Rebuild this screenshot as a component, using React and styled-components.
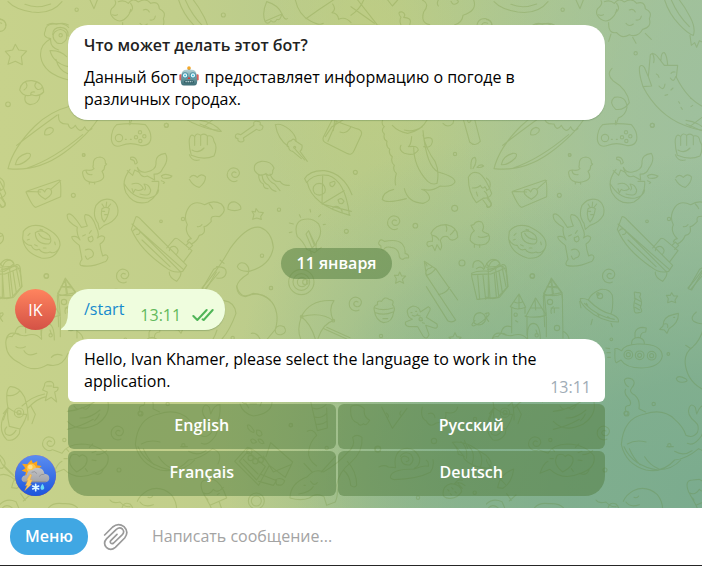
import React from "react";
import styled, { createGlobalStyle, css } from "styled-components";

const GlobalStyle = createGlobalStyle`
  * { box-sizing: border-box; }
  body { margin: 0; font-family: "Open Sans", "Noto Sans", sans-serif; font-size: 16px; line-height: 22px; color: #000; }
  button, input { font: inherit; }
`;

const Page = styled.div`
  display: flex;
  flex-direction: column;
  min-height: 100vh;
  background: #fff;
`;

const Chat = styled.main`
  position: relative;
  flex: 1;
  display: flex;
  flex-direction: column;
  padding: 25px 15px 12px;
  background:
    radial-gradient(ellipse 60% 68% at 102% 98%, #7aab8e 0%, rgba(122, 171, 142, 0.85) 35%, rgba(122, 171, 142, 0) 100%),
    radial-gradient(ellipse 42% 70% at 108% 24%, #9dbf9f 0%, rgba(157, 191, 159, 0.7) 45%, rgba(157, 191, 159, 0) 100%),
    radial-gradient(ellipse 34% 60% at 66% 88%, rgba(134, 178, 140, 0.75) 0%, rgba(134, 178, 140, 0) 100%),
    radial-gradient(ellipse 16% 46% at 53% 10%, rgba(198, 208, 126, 0.6) 0%, rgba(198, 208, 126, 0) 100%),
    linear-gradient(90deg, #c7d28b 0%, #c2cf8b 25%, #b4c98c 52%, #aac691 100%);
`;

const Wallpaper = styled.svg`
  position: absolute;
  inset: 0;
  width: 100%;
  height: 100%;
  pointer-events: none;
`;

const History = styled.div`
  position: relative;
  flex: 1;
  display: flex;
  flex-direction: column;
  max-width: 590px;
`;

const Row = styled.section`
  display: grid;
  grid-template-columns: 41px minmax(0, 1fr);
  column-gap: 12px;
  align-items: end;
  margin-top: ${(p) => p.$gap || 0}px;
`;

const Content = styled.div`
  grid-column: 2;
  min-width: 0;
`;

const Intro = styled.article`
  padding: 9px 16px 10px;
  border-radius: 20px;
  background: #fff;
  box-shadow: 0 1px 1px rgba(70, 110, 60, 0.3);
  h1 { margin: 0 0 10px; font-size: 16px; line-height: 22px; font-weight: 600; color: #222; }
  p { margin: 0; }
`;

const RobotIcon = styled.svg`
  width: 20px;
  height: 20px;
  margin: 0 1px 0 2px;
  vertical-align: -3px;
`;

const Spacer = styled.div`
  flex: 1;
  min-height: 24px;
`;

const DateBadge = styled.time`
  display: block;
  width: fit-content;
  margin: 0 auto;
  padding: 4px 15px 5px;
  border-radius: 16px;
  background: rgba(82, 123, 61, 0.5);
  color: #fff;
  font-weight: 600;
`;

const Avatar = styled.div`
  display: grid;
  place-items: center;
  width: 41px;
  height: 41px;
  border-radius: 50%;
  overflow: hidden;
  color: #fff;
  background: linear-gradient(#ff845e, #d45246);
  svg { display: block; width: 100%; height: 100%; }
`;

const OutBubble = styled.article`
  position: relative;
  display: flex;
  gap: 16px;
  width: fit-content;
  height: 41px;
  padding: 9px 11px 0 16px;
  border-radius: 20px 20px 20px 0;
  background: #effdde;
  box-shadow: 0 1px 1px rgba(70, 110, 60, 0.3);
`;

const Tail = styled.svg`
  position: absolute;
  left: -7px;
  bottom: 0;
  width: 8px;
  height: 18px;
  fill: #effdde;
`;

const Command = styled.a`
  color: #168acd;
  text-decoration: none;
`;

const Sent = styled.span`
  display: flex;
  gap: 11px;
  padding-top: 6px;
  color: #62b95b;
  svg { width: 22px; height: 14px; margin-top: 4px; }
`;

const InBubble = styled.article`
  display: flex;
  align-items: flex-end;
  justify-content: space-between;
  padding: 9px 14px 10px 16px;
  border-radius: 20px 20px 6px 6px;
  background: #fff;
  p { margin: 0; max-width: 460px; }
`;

const Stamp = styled.time`
  margin: 0 0 -6px -40px;
  color: #a0acb6;
`;

const Keyboard = styled.div`
  display: grid;
  grid-template-columns: 1fr 1fr;
  gap: 2px;
  margin-top: 2px;
`;

const corners = { left: "6px 6px 6px 20px", right: "6px 6px 20px 6px" };

const Choice = styled.button`
  height: 45px;
  padding: 0 0 3px;
  border: 0;
  border-radius: 6px;
  background: rgba(82, 123, 61, 0.5);
  color: #fff;
  font-weight: 600;
  cursor: pointer;
  ${(p) => p.$corner && css`border-radius: ${corners[p.$corner]};`}
`;

const Composer = styled.form`
  display: flex;
  align-items: center;
  height: 58px;
  padding: 0 10px;
  border-bottom: 1px solid #262626;
  background: #fff;
`;

const MenuButton = styled.button`
  height: 37px;
  padding: 0 15px 1px;
  border: 0;
  border-radius: 18px;
  background: #40a7e3;
  color: #fff;
  font-weight: 600;
  cursor: pointer;
`;

const AttachButton = styled.button`
  display: grid;
  place-items: center;
  width: 36px;
  height: 37px;
  margin-left: 10px;
  padding: 0;
  border: 0;
  background: none;
  cursor: pointer;
  svg { width: 26px; height: 28px; }
`;

const MessageInput = styled.input`
  flex: 1;
  min-width: 0;
  margin-left: 18px;
  padding: 0 0 1px;
  border: 0;
  outline: 0;
  background: none;
  color: #000;
  &::placeholder { color: #a3a3a3; opacity: 1; }
`;

/* Line drawings of the wallpaper tile, grouped by area; at = origin of the area. */
const SPIRAL = "c-8-6-18 4-9 12c14 8 26-10 14-22c-18-12-36 4-30 24c6 12 18 16 28 10";
const areas = [
  {
    at: [0, 0],
    d: [
      "M24 5Q45 28 95 36Q155 44 186 5M75 13Q110 28 152 12M270 0L282 26L292 0",
      "M345 2Q352 12 335 26Q325 42 345 58Q365 72 385 46Q390 40 392 28M355 5Q372 -2 385 10Q398 -8 415 6Q438 -8 452 10Q476 2 478 26Q500 36 490 56Q498 82 470 88Q456 114 430 104Q408 118 392 98Q366 102 368 68M375 102L368 124M440 112L450 130M478 100L496 118M392 10Q405 28 388 38M338 44q8 4 14 0M430 30q12-6 18 6M420 70q10 12 22 2M450 60q14 2 16-12",
      "M536 0Q548 40 580 74Q606 102 622 106Q630 84 612 50Q596 20 580 0M556 0Q575 45 610 80M612 106l4 30l10-8l6 14l8-20l14 6",
      "M800 5Q785 38 795 64L846 42Q835 15 800 5M795 64q8 12 18-2q10 10 18-4q10 4 14-14M846 42q8 20 16 14",
      "M886 0Q896 45 930 62Q958 78 970 70M918 56L955 30L1000 0M998 12q12 16-2 26q18 2 20 20q20-10 37 10",
      "M0 58a18 18 0 0 1 0 36M136 92Q126 112 152 116M136 92Q136 74 160 72Q190 66 206 82M152 116Q118 134 122 170Q130 222 206 240M158 104Q158 82 182 82Q206 84 204 108M170 128Q152 112 164 96Q184 80 198 98Q206 120 186 130Q176 132 170 128M150 152Q180 150 200 170M150 152Q160 190 205 200M152 118Q150 142 176 150M168 178Q176 212 205 222",
      "M46 133L56 150L80 153L64 170L67 194L46 184L24 193L30 170L16 154L38 150Z",
      "M59 270Q64 240 96 242Q130 246 131 276Q116 292 96 284Q72 294 59 270M76 288Q70 308 90 314Q118 312 120 284M78 248Q86 262 72 270M110 246Q98 258 112 268Q122 270 127 262M92 284Q92 274 104 276",
      "M24 506Q40 442 105 378Q150 334 212 318M24 506Q112 516 190 460Q270 400 298 350M50 436Q98 398 172 345M82 504Q160 478 248 404M176 344Q172 374 204 372Q212 396 226 376Q240 404 254 380Q262 400 276 386M134 404Q132 386 150 382Q164 384 158 396Q148 408 134 404M46 494Q50 468 80 460Q98 458 88 474Q66 496 46 494",
      "M388 374L389 362M350 374Q392 368 436 374Q456 396 452 420Q446 440 420 436Q390 426 366 436Q338 446 334 418Q334 388 350 374M376 418h3M391 418h3",
      "M568 418Q572 398 584 410Q590 396 602 406Q614 398 622 408Q640 404 642 424Q654 440 642 468Q612 482 574 466Q566 440 568 418M584 410v26M602 408v28M622 408v26M568 464Q576 486 598 480M576 450q20 12 36-6",
      "M706 408Q708 398 722 404L762 376Q758 362 772 364Q784 364 780 374Q794 376 786 388Q778 394 770 388L730 414Q736 426 722 426Q712 424 714 416Q706 416 706 408",
      "M826 374Q842 368 868 388Q890 408 888 424L906 436Q908 450 900 454L922 484M886 448L914 480M878 454L904 476M826 374Q834 420 866 440Q866 452 878 454M862 440Q860 424 874 422Q880 412 888 424M600 361Q640 366 664 394Q650 396 620 380L600 372",
      "M970 412L1002 348M970 412Q966 424 980 430L1040 460Q1056 468 1062 452L1084 404Q1088 390 1070 386L1004 362M984 424L1010 364M1004 362L1000 392M976 410L996 380L1044 350M1020 396q20 8 32-14",
    ],
    c: [[230, 29, 5], [670, 45, 6], [24, 313, 7], [499, 376, 6], [251, 465, 4], [357, 414, 11], [420, 397, 5], [408, 412, 5], [433, 409, 5], [421, 423, 5], [182, 106, 5], [884, 442, 3]],
  },
  {
    at: [1053, 0],
    d: [
      "M0 76L86 76M20 0L80 76M0 20L70 70M38 0Q28 26 0 46M110 0L124 18L140 0M150 52Q136 34 154 36Q166 42 158 52Q180 54 178 66L176 75M150 52Q144 62 150 75",
      "M214 0Q238 12 218 36Q208 70 236 74M262 0Q256 10 262 18M300 4Q306 18 318 10Q326 4 318 0M368 0Q380 32 336 46Q334 68 310 75M378 75Q382 54 404 56Q424 62 422 76M392 75Q396 64 410 70M546 75Q560 66 574 73Q596 66 610 75",
      "M783 205Q765 222 786 242Q830 268 835 308Q820 332 794 328Q772 308 790 292Q826 286 828 322Q824 346 802 354L795 374",
      "M876 260Q862 216 866 200Q872 192 880 202L892 230M876 260Q920 344 1000 376Q1040 392 1060 390M892 230L898 164Q908 156 918 168L940 196L980 196L976 232Q1010 300 1060 322M930 180Q930 156 940 158Q948 166 950 196M876 260L902 258L892 230M904 160Q912 172 908 188M924 258Q938 276 942 252M958 234q10 16 16-4M924 232q-2-8-8-10M960 220q4-6 12-4M960 270l6-6M1018 294l6 4M990 322l4 6M986 310l-3-5M1020 320l5-4M950 284l-8 2M1016 380L1056 350",
      "M95 360Q90 374 100 380Q88 390 100 402Q96 418 108 424Q104 440 116 448Q112 462 124 470Q118 486 130 496Q124 510 136 520Q130 540 134 555",
      "M228 360Q212 392 170 400Q140 394 124 376M160 390Q186 398 214 380M182 410Q180 436 172 440M150 436Q142 450 160 460Q190 470 202 450Q200 436 176 440M220 415Q246 408 244 426Q240 446 218 440M216 405Q226 450 252 484Q266 514 258 550M188 440Q188 500 230 544Q244 556 258 550M216 392Q226 500 262 516Q312 530 312 546Q304 562 268 558Q240 576 218 568",
      "M338 362L356 426Q372 442 388 424L372 362M350 362Q352 374 360 362M276 370Q290 386 306 370L308 362",
    ],
    c: [[312, 462, 5], [13, 517, 6], [854, 160, 5], [904, 376, 6]],
  },
  {
    at: [0, 360],
    d: [
      "M280 135Q278 112 300 111Q318 114 316 130L320 132L314 138Q314 150 306 154Q322 180 288 186Q252 192 248 160Q246 150 260 150Q274 154 282 146M280 135Q277 142 282 146M258 152Q260 166 276 164M268 186v6M284 186v6",
      "M80 214L178 180Q184 184 182 230L108 262Q98 262 78 216ZM80 214L122 216M182 182L152 208M136 238Q108 222 116 210Q128 204 134 216Q140 200 152 208Q162 222 136 238M-8 170Q20 180 10 206Q0 214 -18 222M4 228L16 250Q14 262 4 262L-12 238",
      "M390 148Q362 184 378 218Q402 258 444 246Q480 226 476 184M382 152L398 166L404 150L420 158M372 190Q400 240 448 234Q474 228 476 210M412 142Q420 160 440 156Q470 150 468 128Q466 104 496 100Q508 120 488 146Q480 164 462 162L464 180L442 168Q422 178 412 142M456 184h18M392 112Q408 108 412 128Q404 136 404 128Q404 120 392 118ZM484 168Q494 158 516 168Q510 178 488 174ZM484 182Q500 188 490 190M396 192Q420 184 430 206Q416 216 406 208L400 218L396 206M420 222Q452 232 452 210Q446 192 432 192Q440 204 434 210",
      "M570 172Q580 160 592 172Q604 158 616 170Q618 186 598 202Q580 200 568 178M708 158" + SPIRAL,
      "M764 152Q758 128 784 124Q812 122 822 144L818 152Q820 166 806 166Q796 160 790 164Q776 170 764 152M776 166Q776 186 790 192Q790 206 804 206M786 164Q788 190 806 196Q814 212 828 214M798 160Q804 184 824 192L840 212M810 162Q820 188 840 184Q850 198 868 196",
      "M914 176Q930 150 974 152Q1030 160 1056 224M914 176L920 188Q940 160 984 166Q1036 182 1048 284M922 188Q936 256 1050 286M968 168L966 252M966 252L1032 212M966 252L1054 274M942 198Q950 186 968 192Q980 204 974 218Q960 232 944 220Q936 210 942 198M990 188q-2 12 8 12q12-12 4-16zM1014 240q10-10 18 4q-4 10-14 6zM998 268q0-12 16-8q14 8 12 18",
      "M232 322Q198 304 202 284Q214 272 244 322Q256 320 262 318Q250 290 256 284Q276 282 288 320Q300 344 292 354Q306 342 314 352Q314 364 300 372Q302 392 308 408Q322 400 324 412Q320 426 312 426Q272 444 242 436Q236 430 246 418L238 376Q212 356 216 350Q232 346 240 360Q228 340 232 322M256 390Q272 382 280 398Q282 412 268 414Q262 424 256 408M248 348l8-4M268 340l6-8M264 354L276 348Q284 362 272 366Q262 362 266 352",
      "M298 328L294 310Q276 286 288 256Q308 230 336 240Q360 256 352 286Q340 308 312 316ZM306 266Q318 258 328 266Q324 294 312 306Q300 292 306 266M312 262L306 252M318 262L320 246M324 262L332 252M314 284h8M308 274h6",
      "M70 334Q90 308 130 320Q182 344 180 376Q168 420 124 414Q72 398 68 354ZM106 338Q124 324 148 346Q158 366 146 372Q106 372 106 338M68 358Q80 378 94 376Q100 394 118 388Q130 404 150 396Q164 404 178 384M116 340Q124 358 148 358M90 340l-6 6M82 360l6-2M104 374l8 4M130 384h8M164 366l2 8M120 328l8 2",
      "M394 328L408 290Q414 288 424 300L560 436L548 454Q520 462 494 440Q420 390 394 328M396 312L550 448M410 324L540 454M426 360L510 440M500 384L524 356Q530 352 540 362L576 392L552 424M508 392Q510 376 526 380Q540 390 530 402M558 376L568 366L578 376L566 388M562 366Q566 356 574 356Q552 334 562 314Q548 288 568 260Q584 240 614 254Q640 238 664 252Q684 272 658 290Q628 284 634 304Q620 320 612 320Q618 344 598 346Q590 366 574 372M592 320Q600 322 606 314M628 252Q636 260 638 266M508 456Q506 472 530 484Q546 466 542 454M400 332Q406 322 418 330Q424 342 410 344",
      "M684 262Q686 244 706 246Q726 256 722 268Q704 276 684 268ZM768 266L776 276L790 278L782 290L784 298L770 294L758 298L762 284L756 274L766 276Z",
      "M892 350Q880 312 904 300Q936 290 956 312Q970 338 950 366Q946 378 950 390M892 350Q910 364 920 388M918 342L936 384L946 374L926 332ZM928 338L942 374M920 388L944 398L964 382M930 388l4 14M902 292l-4-8M932 276l-2-8M956 290l6-6M970 314l6-1M880 312l-12-3M876 336l-8 2",
      "M606 504Q654 450 690 386Q740 316 780 322Q816 336 820 382Q812 436 748 454Q718 456 712 440Q716 424 734 430Q752 442 744 462Q714 480 710 500Q712 528 736 530Q780 510 810 540M614 508L658 456M660 420L672 430M650 440Q682 440 678 460Q674 478 650 474",
      "M376 462" + SPIRAL,
      "M-4 442L46 438Q62 438 66 500L42 530M-4 442L-20 450M6 442L12 536M28 440L38 526M48 440L60 500M8 440Q16 416 34 422Q46 432 40 440M-6 530L20 536L40 532M-8 440Q-16 420 0 430L8 440M172 528L196 474L228 518L174 528M186 500L214 500M196 476L202 520",
    ],
    c: [[251, 105, 4], [220, 226, 6], [483, 304, 4], [549, 297, 5], [837, 269, 5], [786, 407, 5], [813, 504, 5], [139, 468, 7], [1039, 334, 6], [904, 486, 38], [904, 486, 25], [906, 486, 14]],
  },
  {
    at: [1053, 360],
    d: [
      "M94 238Q96 216 128 208M94 238Q104 252 166 236M160 206Q170 248 216 250Q252 240 222 212L212 208",
      "M352 172Q362 150 384 160Q402 170 422 220Q416 236 398 234L376 248Q352 220 352 172M364 204Q382 204 388 196Q394 210 402 200L408 210M396 240L412 262Q424 260 420 250L408 234M376 216l4 12M400 214q8 6 10 16M360 146Q358 112 372 112Q380 124 366 146M378 142Q388 130 398 138Q390 144 380 142M136 302" + SPIRAL,
      "M228 374Q226 362 244 364Q246 346 240 340Q252 314 286 314Q322 322 320 352Q302 370 290 350Q272 346 268 362Q276 380 268 390L258 374L252 392L244 376L232 380ZM284 314Q290 326 286 334M312 328Q304 340 298 344M244 346Q258 348 264 360",
      "M364 324L360 316L368 314Q376 300 392 306Q402 318 394 332Q398 338 412 342Q422 360 404 372Q374 382 358 362Q356 342 370 332Q364 328 364 322M382 350Q396 356 414 346M370 374v8M386 374v8M84 366Q88 354 100 364Q140 356 154 372Q164 384 162 400Q176 404 172 414Q160 412 156 418Q144 418 144 402Q140 384 120 382Q102 378 98 390Q88 390 90 378Q80 372 84 366",
      "M220 424L226 466L314 600M220 424L254 446L320 540M226 466Q242 462 254 446M262 524Q284 520 296 502M222 430q6 2 6 8M224 462Q224 446 238 444L244 440M146 456L152 468L164 468L154 478L158 490L146 484L134 490L136 476L130 466L142 466Z",
      "M362 460Q380 450 418 454L454 434Q464 432 466 446L470 500L440 532L378 538L362 470ZM364 464L420 462L464 444M380 466L386 538M396 466L404 538M412 466L412 536M430 460L436 530M444 454L454 518M366 442Q364 420 384 422Q400 430 400 446M400 446Q410 420 426 418Q446 420 446 432Q430 448 410 448M376 446Q390 436 398 448",
      "M1012 506L1046 448L1060 440M1022 510L1054 456M1012 506L1022 510M314 600Q304 610 290 602L226 500",
    ],
    c: [[311, 265, 9], [193, 317, 7], [333, 429, 9], [544, 468, 6]],
  },
  {
    at: [0, 840],
    d: [
      "M60 250Q20 232 18 196Q14 166 36 170Q44 154 60 164M60 250Q100 280 142 254Q186 266 204 220M48 200Q60 208 76 200M72 212Q84 232 110 220M154 232Q166 218 186 226M172 48L176 140M150 150L154 162M228 46L230 60M196 100Q192 86 202 80",
      "M24 384Q14 330 30 320Q56 318 74 352Q86 386 84 420M24 384Q16 400 10 420M22 346Q44 350 58 334M134 316Q132 304 150 304Q164 306 160 322L174 322Q176 332 164 336L170 366L154 352L136 362L142 336L128 330ZM140 318h16M134 342Q94 350 66 378M138 350Q110 356 84 384",
      "M8 124q-10-10-8-24",
    ],
    c: [[57, 398, 14], [57, 398, 6]],
  },
  {
    at: [1053, 840],
    d: [
      "M70 92Q66 76 80 74Q76 60 92 64Q100 48 114 58Q132 60 124 74Q134 82 128 96Q124 128 98 128Q74 122 70 92M72 84Q96 94 126 84M74 98Q100 108 126 96M96 116h14",
      "M170 100Q164 86 186 78Q206 80 208 96L232 80Q242 84 234 96L226 112L258 132Q262 146 250 144L224 136L234 164Q226 182 216 168L200 140L174 140Q160 136 164 126L184 118Q170 112 170 100M180 98h3M194 94h3M184 106Q194 112 200 102M200 106l8 2M206 120l8 2M214 128l6 2",
      "M372 122Q356 136 368 138Q396 128 414 104Q416 94 402 102M368 118Q370 98 388 98Q408 104 402 124Q388 142 370 130ZM312 158L318 170L330 172L320 184M312 158L306 170L294 172L302 180",
      "M482 82L482 158M522 82L522 100M482 82Q498 92 524 82L504 42L478 80ZM490 66q10 6 24 0M504 44L504 84M524 110L554 54L586 106Q552 116 522 108ZM540 84h30M552 56L554 90M528 110L528 166M586 110L586 170M578 40L602 -2L634 42Q606 52 578 42M580 44L586 106M634 44L636 174M600 0L604 40M588 20L620 24M530 178Q526 130 548 130Q568 132 568 180M600 84h24M610 84v14M494 122l6 4M424 176Q430 156 450 160Q456 132 480 140M450 160Q470 170 486 166Q512 158 528 176M636 154Q650 160 654 176",
      "M688 56Q686 66 706 86Q750 126 802 126Q806 112 780 102M688 56Q700 54 712 60M712 60Q720 40 750 28Q776 26 784 46Q788 80 780 102Q748 96 712 60M700 70Q740 110 790 118M686 64L690 84M724 118L720 134M780 130L784 140M706 70l4 6M740 102l4 6M770 110l6 4",
      "M850 40Q848 34 860 38Q874 36 866 50Q876 66 868 82Q878 98 864 98Q848 102 850 88Q846 74 852 58ZM850 54L868 64M850 68L870 78M852 82L866 90M962 38L968 48L980 48L972 60L974 68L962 64L950 68L952 56L946 46L958 46Z",
      "M982 100Q984 128 954 146L948 160L940 150L926 148L936 138Q936 110 966 104ZM950 142Q952 128 940 132M968 112h3",
      "M792 210Q788 204 800 206L812 212Q820 194 860 192Q932 190 934 228Q928 262 872 264Q824 264 810 240L796 248Q790 246 792 210M842 192Q840 174 862 172Q880 176 880 190M852 172L852 158Q856 142 876 142L886 144L884 156Q868 156 868 174M768 218h10M770 232h8M764 204l12 2",
      "M1056 150Q1046 182 1026 200Q996 220 1004 260Q1014 310 1060 330M976 296Q980 284 1004 296Q1014 304 1000 306Q980 310 976 296M1036 96Q1016 112 1028 124Q1040 132 1060 132M1004 196l16 10",
      "M820 300Q826 290 844 298Q856 308 842 324Q832 336 852 346Q868 360 864 386L884 396M820 300Q822 316 832 320M824 328Q818 340 830 352Q844 366 836 376Q820 376 824 392",
    ],
    c: [[90, 168, 5], [747, 48, 8], [741, 42, 4], [781, 178, 4], [952, 222, 4], [832, 224, 13], [866, 226, 13], [902, 227, 13], [832, 224, 6], [866, 226, 6], [902, 227, 6], [908, 372, 5], [209, 118, 5], [597, 66, 8], [618, 144, 8], [557, 166, 5], [494, 104, 5], [827, 401, 7]],
  },
  {
    at: [0, 1185],
    d: [
      "M24 38L8 70Q-4 110 20 134Q42 142 58 116L60 102M24 38L10 56M92 32L106 58L96 86M24 38Q52 60 80 58M20 96Q10 106 18 118Q34 128 48 106M80 58Q78 74 60 102L28 94Q20 60 24 38M154 140" + SPIRAL,
      "M360 108" + SPIRAL,
      "M0 192Q4 214 50 250M0 240Q26 230 60 270M10 210L40 240M62 296L76 316M70 318L90 300M0 328Q20 308 48 320L56 338M146 338Q160 322 188 326Q220 324 232 338M8 338Q20 326 36 338",
    ],
    c: [[193, 135, 5], [873, 90, 5], [769, 318, 24], [769, 318, 15]],
  },
  {
    at: [180, 1194],
    d: [
      "M22 70Q56 106 112 78Q152 50 144 12M22 40Q74 36 120 0M42 24q10 16 24 4q14 14 24 -6M60 60Q90 62 120 36M104 68q10-10 14-20M22 94Q62 86 100 64",
      "M-20 156L6 166Q20 140 64 138Q120 140 144 174Q150 210 104 226Q50 250 12 214L-18 226Q-8 196 6 190M50 222Q18 196 34 172Q50 164 58 176Q66 164 80 178Q88 202 50 222M100 226Q124 236 130 212M88 148L98 138M96 164l12-4M96 186l12 2M76 212l6 8M26 160l-8-8M22 182h-10M110 170Q128 170 140 158",
      "M226 140Q232 60 296 48Q352 30 386 64Q412 86 420 112Q440 122 454 104Q462 84 448 72Q420 50 430 28Q436 14 448 28L452 48Q462 20 480 20Q482 60 470 74Q478 106 458 124Q440 144 424 136M226 140Q240 200 300 216Q350 226 386 186Q420 184 458 152Q490 164 474 198M234 146Q260 204 336 216Q380 214 404 186M250 152Q262 180 282 200M296 176Q310 200 340 214M244 138Q268 124 300 132M362 146h20M386 160Q412 176 438 158",
      "M540 18Q548 46 580 54Q634 46 636 14M546 0Q544 20 558 16L566 30M570 18h20M600 24l6-14M562 82Q568 76 582 98Q584 108 570 98Q562 92 562 82M590 96Q606 96 606 110Q598 120 590 108ZM572 126Q580 118 590 132Q576 142 572 126M594 124Q606 120 612 136Q600 140 594 124",
      "M562 148L524 190L596 262L628 202L676 238L698 192L632 134L618 176M562 148Q580 150 618 188L628 202M538 190L564 160L616 206L590 246ZM600 228L650 248L640 262L596 250M610 174L640 222L692 200M550 184l44 44M646 246Q660 236 674 248Q670 266 650 260Z",
      "M752 10L772 98L802 90L800 30M758 30q20 8 40-10M762 56q20 8 38-10M768 78q18 4 32-8M742 100Q760 90 770 112Q750 130 746 160Q742 184 770 204M732 196l24 26M784 222L826 176",
      "M690 300Q690 256 742 236Q764 210 790 222Q836 196 862 164Q888 144 878 118Q890 106 906 118Q910 160 872 194Q836 222 830 262Q836 290 826 312L800 322L792 296Q768 282 748 300Q722 310 690 300M752 250q10 16 20 4M716 288Q748 284 760 266M862 190Q890 220 890 262Q884 272 872 262Q870 232 850 216M732 262h4",
      "M428 282Q414 246 440 246L460 244Q484 254 500 300L450 322ZM430 284q18 10 30-10q12 14 30-6M478 312L486 336M450 322L456 336M440 300l4 6M472 290l6-4M150 306Q158 318 180 312Q194 328 210 326M186 330Q190 310 210 318Q222 330 216 340M232 310Q240 290 262 278Q300 260 334 290Q350 310 350 336M240 312Q252 330 280 320M264 298q10 4 14-4",
    ],
    c: [[240, 46, 6], [370, 142, 5], [568, 160, 8], [572, 180, 8], [586, 190, 8], [602, 186, 8], [692, 82, 5], [953, 153, 9], [177, 216, 6], [800, 150, 5]],
  },
  {
    at: [1053, 1185],
    d: [
      "M0 34Q24 24 40 42Q36 64 56 76Q44 96 38 86Q26 96 20 84Q-6 76 0 34M92 36L124 100L168 40M106 54q10 8 4 14M150 48q-8 10 2 14",
      "M214 36Q206 68 226 78Q236 100 256 84Q290 80 284 52Q316 60 320 36M232 56Q250 50 252 68",
      "M84 216Q100 208 112 216L134 218Q126 180 150 164Q190 150 206 190Q208 212 190 220M120 240Q130 222 190 222Q220 210 232 214Q234 200 226 196M246 194Q250 216 238 232Q200 252 130 254Q114 252 120 240M148 184Q160 166 180 178Q194 196 176 210Q152 212 150 190Q158 178 172 188Q178 198 166 200M304 142Q330 138 360 152L404 180Q432 206 412 220Q364 218 340 192L336 180ZM304 142Q320 158 322 178L340 184M330 140Q352 160 346 190M352 152Q374 172 364 206M380 164Q400 188 388 216M340 136L350 160",
      "M276 296Q276 272 300 266Q330 268 332 290Q318 312 294 310Q276 308 276 296M310 268Q320 250 334 256M316 264Q328 260 342 272M320 264L334 280M290 284l4 4M302 278l4 4M312 290l4 4M298 296l4 4M440 278Q446 238 488 222Q484 262 456 280Z",
    ],
    c: [[249, 138, 8], [81, 163, 8], [371, 293, 5], [201, 308, 5], [372, 72, 5]],
  },
  {
    at: [540, 810],
    d: [
      "M170 48Q180 92 220 70Q280 76 290 130Q294 152 286 178M286 178Q292 162 312 170Q324 188 304 194Q284 196 286 178M286 178L262 207M132 92Q164 96 168 130Q150 180 126 207M364 140Q390 86 462 92Q444 116 460 152M364 140Q424 124 460 152Q430 160 414 205M364 140Q350 180 362 207M364 140Q392 160 406 207M432 176L500 207M440 172L510 203M214 190Q230 186 240 207M534 96" + SPIRAL,
    ],
    c: [[273, 54, 5], [376, 36, 8], [365, 140, 4], [460, 152, 4], [158, 204, 5]],
  },
];

function Doodles() {
  return (
    <>
      {areas.map((a, i) => (
        <g key={i} transform={`translate(${a.at[0]} ${a.at[1]})`}>
          <path d={a.d.join("")} />
          {a.c.map(([x, y, r], j) => <circle key={j} cx={x} cy={y} r={r} />)}
        </g>
      ))}
    </>
  );
}

function ChatWallpaper() {
  return (
    <Wallpaper aria-hidden="true">
      <defs>
        <g id="doodles" fill="none" stroke="#4f6f08" strokeWidth="3.4" strokeLinecap="round" strokeLinejoin="round">
          <Doodles />
        </g>
        <pattern id="tile" width="1458" height="2997" patternUnits="userSpaceOnUse" patternTransform="scale(0.33333)">
          <use href="#doodles" />
          <use href="#doodles" x="-1458" />
        </pattern>
      </defs>
      <rect width="100%" height="100%" fill="url(#tile)" opacity="0.17" />
    </Wallpaper>
  );
}

function Robot() {
  return (
    <RobotIcon viewBox="0 0 66 66" aria-hidden="true">
      <defs>
        <linearGradient id="steel" x1="0" y1="0" x2="0" y2="1">
          <stop offset="0" stopColor="#b7d3d6" />
          <stop offset="0.5" stopColor="#6f9da3" />
          <stop offset="1" stopColor="#3d6c74" />
        </linearGradient>
      </defs>
      <rect x="29" y="7" width="8" height="9" fill="#52747b" />
      <circle cx="33" cy="7" r="6" fill="#f5a828" />
      <rect x="1" y="27" width="9" height="21" rx="4" fill="#d9605c" />
      <rect x="56" y="27" width="9" height="21" rx="4" fill="#d9605c" />
      <path d="M8 28Q10 12 24 12H42Q56 12 58 28L60 50Q60 64 50 64H16Q6 64 6 50Z" fill="url(#steel)" />
      <circle cx="20" cy="31" r="10" fill="#4c91a5" />
      <circle cx="46" cy="31" r="10" fill="#4c91a5" />
      <circle cx="20" cy="31" r="7" fill="#e5fbff" />
      <circle cx="46" cy="31" r="7" fill="#e5fbff" />
      <circle cx="20" cy="31" r="3" fill="#35b7d7" />
      <circle cx="46" cy="31" r="3" fill="#35b7d7" />
      <path d="M33 35L38 43H28Z" fill="#d33c3c" />
      <rect x="17" y="48" width="32" height="9" rx="4" fill="#2d5962" />
      <path d="M21 52H45" stroke="#d9eef0" strokeWidth="4" strokeDasharray="5 2" />
    </RobotIcon>
  );
}

function WeatherLogo() {
  return (
    <svg viewBox="0 0 123 123" role="img" aria-label="Погода">
      <defs>
        <linearGradient id="sky" x1="0" y1="0" x2="0" y2="1">
          <stop offset="0" stopColor="#5b8df0" />
          <stop offset="1" stopColor="#1c55dd" />
        </linearGradient>
        <linearGradient id="cloud" x1="0" y1="0" x2="0" y2="1">
          <stop offset="0" stopColor="#c3c3c5" />
          <stop offset="1" stopColor="#a2a3a8" />
        </linearGradient>
      </defs>
      <rect width="123" height="123" fill="url(#sky)" />
      <path d="M49 14L54 25L67 18L66 31L80 33L70 42L74 56L30 62L33 52L20 47L31 40L21 26L37 28L42 22Z" fill="#f9a51c" />
      <circle cx="49" cy="40" r="14" fill="#ffc545" />
      <circle cx="46" cy="36" r="7" fill="#ffe08c" />
      <path d="M30 82Q18 80 20 69Q24 59 35 61Q37 45 52 45Q60 36 72 39Q86 41 88 56Q103 57 103 70Q102 80 92 82Z" fill="url(#cloud)" />
      <path d="M28 80H94M50 52Q60 46 66 56M72 65Q78 56 88 58" fill="none" stroke="#85868c" strokeWidth="2" />
      <path d="M45 58L50 60L45 75L52 74L46 88L50 88L29 107L37 91L31 92L39 76L35 76Z" fill="#ffc857" stroke="#eda537" strokeWidth="1" />
      <path d="M62 88V107M53 93L71 102M71 93L53 102" stroke="#dff8ff" strokeWidth="5" strokeLinecap="round" />
      <path d="M82 86Q91 98 86 103Q80 107 77 101Q75 97 82 86Z" fill="#6adbf5" />
    </svg>
  );
}

const choices = [
  { label: "English", lang: "en" },
  { label: "Русский", lang: "ru" },
  { label: "Français", lang: "fr", corner: "left" },
  { label: "Deutsch", lang: "de", corner: "right" },
];

export default function App() {
  return (
    <Page>
      <GlobalStyle />
      <Chat>
        <ChatWallpaper />
        <History>
          <Row>
            <Content>
              <Intro>
                <h1>Что может делать этот бот?</h1>
                <p>Данный бот<Robot /> предоставляет информацию о погоде в различных городах.</p>
              </Intro>
            </Content>
          </Row>
          <Spacer />
          <Row>
            <Content>
              <DateBadge>11 января</DateBadge>
            </Content>
          </Row>
          <Row $gap={10}>
            <Avatar>IK</Avatar>
            <Content>
              <OutBubble>
                <Tail viewBox="0 0 8 18" aria-hidden="true"><path d="M7 0Q7 13 0 17V18H8V0Z" /></Tail>
                <Command href="#start">/start</Command>
                <Sent>
                  <time>13:11</time>
                  <svg viewBox="0 0 66 42" fill="none" stroke="#4fb557" strokeWidth="6" strokeLinecap="round" strokeLinejoin="round" role="img" aria-label="Прочитано">
                    <path d="M4 24L16 36L44 6M32 34L35 36L62 6" />
                  </svg>
                </Sent>
              </OutBubble>
            </Content>
          </Row>
          <Row $gap={9}>
            <Avatar><WeatherLogo /></Avatar>
            <Content>
              <InBubble>
                <p>Hello, Ivan Khamer, please select the language to work in the application.</p>
                <Stamp>13:11</Stamp>
              </InBubble>
              <Keyboard>
                {choices.map((c) => (
                  <Choice key={c.lang} type="button" lang={c.lang} $corner={c.corner}>{c.label}</Choice>
                ))}
              </Keyboard>
            </Content>
          </Row>
        </History>
      </Chat>
      <Composer onSubmit={(e) => e.preventDefault()}>
        <MenuButton type="button">Меню</MenuButton>
        <AttachButton type="button" aria-label="Прикрепить файл">
          <svg viewBox="0 0 78 84" fill="none" stroke="#999" strokeWidth="5" strokeLinecap="round" strokeLinejoin="round" aria-hidden="true">
            <path d="M5 36L29 12Q46 -2 63 11Q79 27 65 45L37 73Q23 85 10 73Q-1 60 11 47L40 19Q50 11 58 18Q66 26 58 35L32 60Q27 64 23 60Q20 56 24 52L42 34" />
          </svg>
        </AttachButton>
        <MessageInput type="text" aria-label="Сообщение" placeholder="Написать сообщение..." />
      </Composer>
    </Page>
  );
}
